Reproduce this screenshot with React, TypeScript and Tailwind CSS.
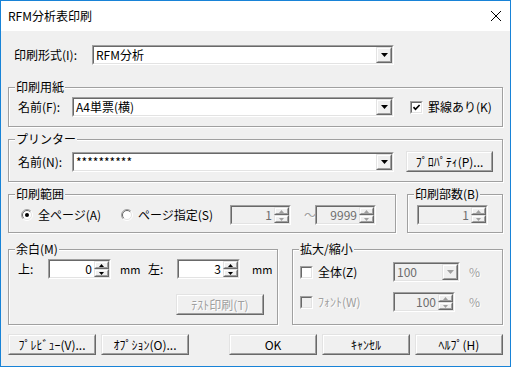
import React from 'react'

const sunkenOuter = 'border border-t-[#a0a0a0] border-l-[#a0a0a0] border-r-white border-b-white'
const sunkenInner = 'border border-t-[#696969] border-l-[#696969] border-r-[#e3e3e3] border-b-[#e3e3e3]'
const raisedOuter = 'border border-t-[#e3e3e3] border-l-[#e3e3e3] border-r-[#696969] border-b-[#696969]'
const raisedInner = 'border border-t-white border-l-white border-r-[#a0a0a0] border-b-[#a0a0a0]'
const etched = 'text-[#a0a0a0] [text-shadow:1px_1px_0_#fff]'

function Raised({ className = '', children }: { className?: string; children?: React.ReactNode }) {
  return (
    <div className={`${raisedOuter} bg-[#f0f0f0] ${className}`}>
      <div className={`${raisedInner} w-full h-full flex items-center justify-center`}>{children}</div>
    </div>
  )
}

function Combo({ w, value, disabled = false }: { w: string; value: string; disabled?: boolean }) {
  return (
    <div className={`${sunkenOuter} ${w} h-[20px] shrink-0`}>
      <div className={`${sunkenInner} h-full flex ${disabled ? 'bg-[#f0f0f0]' : 'bg-white'}`}>
        <div className={`flex-1 flex items-center pl-[2px] ${disabled ? 'text-[#6d6d6d]' : ''}`}>{value}</div>
        <Raised className="w-[16px] h-full">
          <svg width="7" height="4" viewBox="0 0 7 4">
            <path d="M0 0h7L3.5 4z" fill={disabled ? '#a0a0a0' : '#000'} />
          </svg>
        </Raised>
      </div>
    </div>
  )
}

function Spin({ w, value, disabled = false }: { w: string; value: string; disabled?: boolean }) {
  const c = disabled ? '#a0a0a0' : '#000'
  return (
    <div className={`${sunkenOuter} ${w} h-[20px] shrink-0`}>
      <div className={`${sunkenInner} h-full flex ${disabled ? 'bg-[#f0f0f0]' : 'bg-white'}`}>
        <div className={`flex-1 flex items-center justify-end pr-[2px] ${disabled ? 'text-[#6d6d6d]' : ''}`}>{value}</div>
        <div className="w-[15px] flex flex-col">
          <Raised className="h-[8px]">
            <svg width="5" height="3" viewBox="0 0 5 3"><path d="M2.5 0L5 3H0z" fill={c} /></svg>
          </Raised>
          <Raised className="h-[8px]">
            <svg width="5" height="3" viewBox="0 0 5 3"><path d="M0 0h5L2.5 3z" fill={c} /></svg>
          </Raised>
        </div>
      </div>
    </div>
  )
}

function Check({ checked = false, disabled = false, className = '' }: { checked?: boolean; disabled?: boolean; className?: string }) {
  return (
    <div className={`${sunkenOuter} w-[13px] h-[13px] shrink-0 ${className}`}>
      <div className={`${sunkenInner} w-full h-full flex items-center justify-center ${disabled ? 'bg-[#f0f0f0]' : 'bg-white'}`}>
        {checked && (
          <svg width="9" height="9" viewBox="0 0 9 9">
            <path d="M1.5 4.2L3.5 6.3L7.6 2" stroke="#000" strokeWidth="1.7" fill="none" />
          </svg>
        )}
      </div>
    </div>
  )
}

function Radio({ selected = false, className = '' }: { selected?: boolean; className?: string }) {
  return (
    <svg width="12" height="12" viewBox="0 0 12 12" className={`shrink-0 ${className}`}>
      <circle cx="6" cy="6" r="5" fill="#fff" />
      <path d="M2.1 9.9A5.5 5.5 0 0 1 9.9 2.1" stroke="#a0a0a0" fill="none" />
      <path d="M9.9 2.1A5.5 5.5 0 0 1 2.1 9.9" stroke="#fff" fill="none" />
      <path d="M2.8 9.2A4.5 4.5 0 0 1 9.2 2.8" stroke="#696969" fill="none" />
      <path d="M9.2 2.8A4.5 4.5 0 0 1 2.8 9.2" stroke="#e3e3e3" fill="none" />
      {selected && <circle cx="6" cy="6" r="2" fill="#000" />}
    </svg>
  )
}

function Button({ w = 'w-[88px]', label, disabled = false, className = '' }: { w?: string; label: string; disabled?: boolean; className?: string }) {
  return (
    <Raised className={`${w} h-[21px] shrink-0 ${className}`}>
      <span className={disabled ? etched : ''}>{label}</span>
    </Raised>
  )
}

function Group({ label, className = '', children }: { label: string; className?: string; children?: React.ReactNode }) {
  return (
    <div className={`relative border border-[#a0a0a0] shadow-[inset_1px_1px_0_#fff,1px_1px_0_#fff] ${className}`}>
      <span className="absolute -top-[8px] left-[6px] bg-[#f0f0f0] px-[1px] leading-[14px]">{label}</span>
      {children}
    </div>
  )
}

export default function App() {
  return (
    <div className="w-[511px] h-[367px] border border-[#1883d7] bg-[#f0f0f0] flex flex-col overflow-hidden font-['Noto_Sans_CJK_JP',sans-serif] text-[12px] leading-[14px] text-black">
      <div className="h-[30px] bg-white flex items-center justify-between pl-[7px] pr-[9px] shrink-0">
        <span>RFM分析表印刷</span>
        <svg width="10" height="10" viewBox="0 0 10 10">
          <path d="M0 0L10 10M10 0L0 10" stroke="#000" strokeWidth="1" />
        </svg>
      </div>

      <div className="px-[7px] flex flex-col">
        <div className="mt-[14px] flex items-center h-[20px]">
          <span className="ml-[6px] w-[78px]">印刷形式(I):</span>
          <Combo w="w-[302px]" value="RFM分析" />
        </div>

        <Group label="印刷用紙" className="mt-[22px] pt-[9px] pb-[9px] pl-[9px]">
          <div className="flex items-center h-[20px]">
            <span className="w-[54px]">名前(F):</span>
            <Combo w="w-[322px]" value="A4単票(横)" />
            <Check checked className="ml-[16px]" />
            <span className="ml-[5px]">罫線あり(K)</span>
          </div>
        </Group>

        <Group label="プリンター" className="mt-[12px] pt-[11px] pb-[9px] pl-[9px]">
          <div className="flex items-center h-[21px]">
            <span className="w-[54px]">名前(N):</span>
            <Combo w="w-[322px]" value="**********" />
            <Button w="w-[87px]" label="ﾌﾟﾛﾊﾟﾃｨ(P)..." className="ml-[12px]" />
          </div>
        </Group>

        <div className="mt-[12px] flex">
          <Group label="印刷範囲" className="w-[388px] pt-[10px] pb-[7px] pl-[9px]">
            <div className="flex items-center h-[20px]">
              <Radio selected className="ml-[3px]" />
              <span className="ml-[5px] w-[83px]">全ページ(A)</span>
              <Radio />
              <span className="ml-[5px] w-[92px]">ページ指定(S)</span>
              <Spin w="w-[61px]" value="1" disabled />
              <span className={`ml-[13px] w-[11px] ${etched}`}>～</span>
              <Spin w="w-[61px]" value="9999" disabled />
            </div>
          </Group>
          <Group label="印刷部数(B)" className="ml-[11px] flex-1 pt-[10px] pb-[7px] pl-[9px]">
            <Spin w="w-[71px]" value="1" disabled />
          </Group>
        </div>

        <div className="mt-[16px] flex">
          <Group label="余白(M)" className="w-[270px] pt-[9px] pb-[9px] pl-[9px]">
            <div className="flex items-center h-[20px]">
              <span className="w-[30px]">上:</span>
              <Spin w="w-[63px]" value="0" />
              <span className="ml-[9px] w-[28px] text-[11px]">mm</span>
              <span className="w-[29px]">左:</span>
              <Spin w="w-[63px]" value="3" />
              <span className="ml-[12px] text-[11px]">mm</span>
            </div>
            <div className="mt-[15px] flex">
              <Button label="ﾃｽﾄ印刷(T)" disabled className="ml-[158px]" />
            </div>
          </Group>
          <Group label="拡大/縮小" className="ml-[14px] flex-1 pt-[12px] pl-[7px]">
            <div className="flex items-center h-[20px]">
              <Check />
              <span className="ml-[5px] w-[75px]">全体(Z)</span>
              <Combo w="w-[67px]" value="100" disabled />
              <span className={`ml-[9px] ${etched}`}>%</span>
            </div>
            <div className="mt-[10px] flex items-center h-[20px]">
              <Check disabled />
              <span className={`ml-[5px] w-[75px] ${etched}`}>ﾌｫﾝﾄ(W)</span>
              <Spin w="w-[62px]" value="100" disabled />
              <span className={`ml-[14px] ${etched}`}>%</span>
            </div>
          </Group>
        </div>

        <div className="mt-[9px] flex">
          <Button label="ﾌﾟﾚﾋﾞｭｰ(V)..." />
          <Button label="ｵﾌﾟｼｮﾝ(O)..." className="ml-[5px]" />
          <Button label="OK" className="ml-auto" />
          <Button label="ｷｬﾝｾﾙ" className="ml-[5px]" />
          <Button label="ﾍﾙﾌﾟ(H)" className="ml-[5px]" />
        </div>
      </div>
    </div>
  )
}
